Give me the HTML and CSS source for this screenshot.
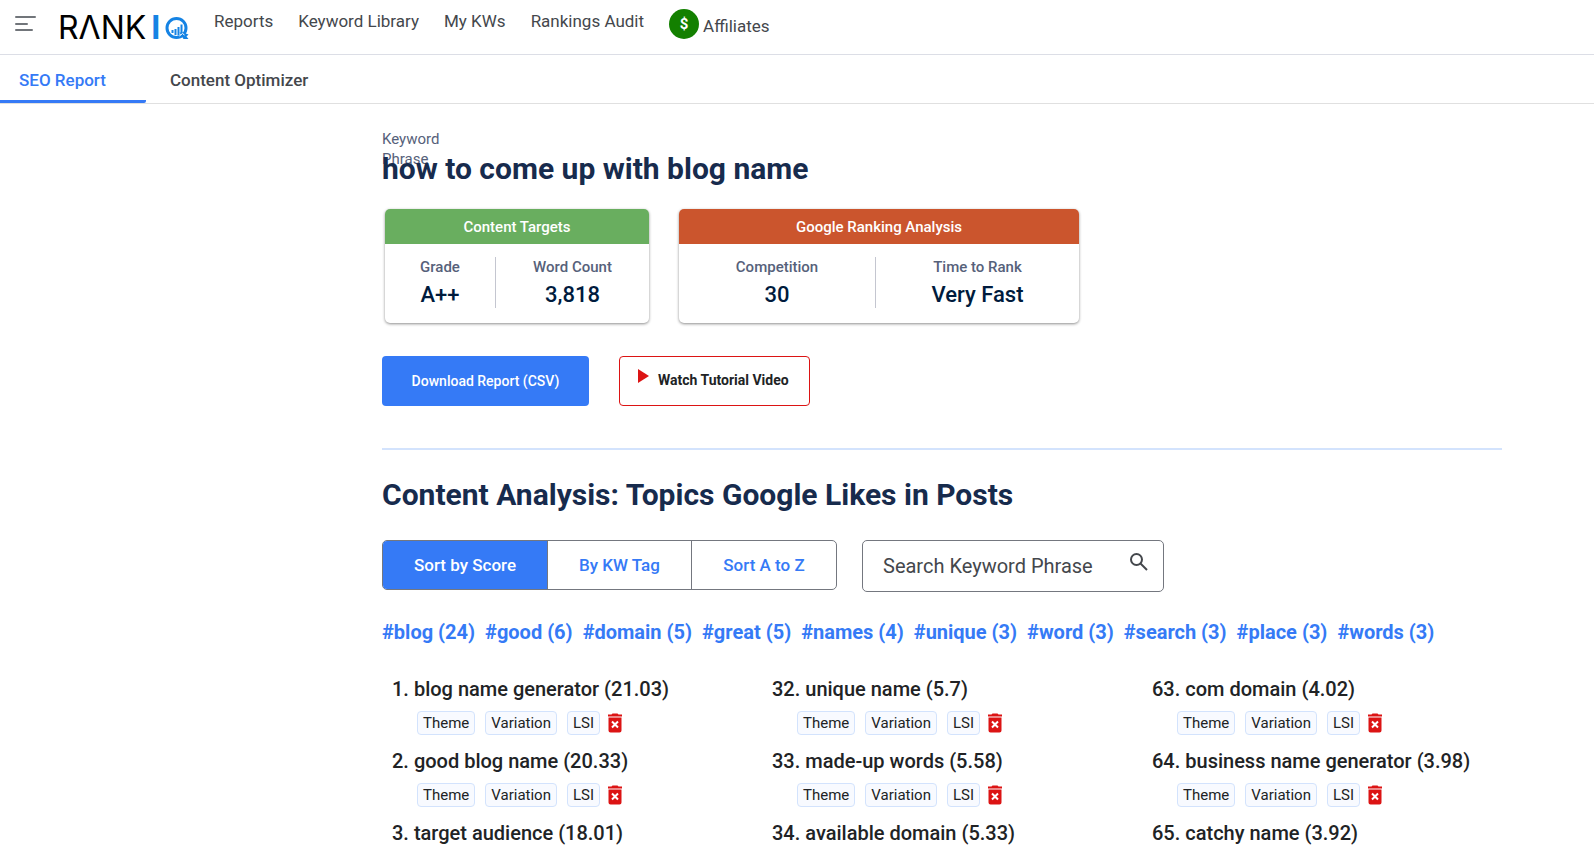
FILE: index.html
```html
<!DOCTYPE html>
<html lang="en">
<head>
<meta charset="utf-8">
<title>RankIQ – SEO Report</title>
<link rel="stylesheet" href="styles.css">
</head>
<body>
<svg class="defs" aria-hidden="true">
  <symbol id="trash" viewBox="0 0 16 20">
    <path d="M4.500 1.500 5.500.5h5l1 1h3.500v2H1v-2zM1.500 4.500h13v13a2 2 0 0 1-2 2h-9a2 2 0 0 1-2-2z"/>
    <path d="m5 8.500 6 6m0-6-6 6" stroke="#fff" stroke-width="2"/>
  </symbol>
</svg>
<header class="topbar">
  <button class="menu" aria-label="Toggle menu">
    <svg width="22" height="16" viewBox="0 0 22 16" fill="none" stroke="#71757a" stroke-width="2" stroke-linecap="round"><path d="M2 2h19M2 9h11M2 15h16"/></svg>
  </button>
  <a class="logo" href="#" aria-label="RankIQ"><span>RΛNK</span><span class="logo-i">I</span>
    <svg width="24" height="23" viewBox="0 0 24 23"><circle cx="11.500" cy="11" r="9.500" fill="none" stroke="#1583e4" stroke-width="3"/><path d="M14.500 15.500 18 15.500l5.500 2-2 2 2 2.500h-5z" fill="#1583e4"/><path d="M7.500 13v3M10.500 12v6M13.500 10v8.500M16.500 7.500v9" stroke="#1583e4" stroke-width="2"/><path d="m14.500 19 3-2.500 2 1.500" fill="none" stroke="#fff"/></svg>
  </a>
  <nav class="nav">
    <a href="#">Reports</a><a href="#">Keyword Library</a><a href="#">My KWs</a><a href="#">Rankings Audit</a>
    <a class="affiliates" href="#"><span class="coin">$</span><span>Affiliates</span></a>
  </nav>
</header>
<nav class="tabs"><a class="tab active" href="#">SEO Report</a><a class="tab" href="#">Content Optimizer</a></nav>
<main class="page">
  <div class="phrase">
    <p class="label">Keyword Phrase</p>
    <h1 class="title">how to come up with blog name</h1>
  </div>
  <section class="cards">
    <div class="card targets">
      <h2 class="card-head">Content Targets</h2>
      <dl class="stats"><div class="stat"><dt>Grade</dt><dd>A++</dd></div><div class="stat"><dt>Word Count</dt><dd>3,818</dd></div></dl>
    </div>
    <div class="card ranking">
      <h2 class="card-head">Google Ranking Analysis</h2>
      <dl class="stats"><div class="stat"><dt>Competition</dt><dd>30</dd></div><div class="stat"><dt>Time to Rank</dt><dd>Very Fast</dd></div></dl>
    </div>
  </section>
  <div class="actions">
    <button class="download">Download Report (CSV)</button>
    <button class="watch"><svg width="11" height="14" viewBox="0 0 11 14"><path d="M0 0 11 7 0 14z" fill="#dc1414"/></svg>Watch Tutorial Video</button>
  </div>
  <hr class="rule">
  <h2 class="title">Content Analysis: Topics Google Likes in Posts</h2>
  <div class="filters">
    <div class="sort"><button class="on">Sort by Score</button><button>By KW Tag</button><button>Sort A to Z</button></div>
    <div class="search"><input type="text" aria-label="Search Keyword Phrase" placeholder="Search Keyword Phrase">
      <button aria-label="Search"><svg width="18" height="18" viewBox="0 0 18 18" fill="none" stroke="#44474c" stroke-width="2"><circle cx="6.500" cy="6.500" r="5.500"/><path d="m10.500 10.500 6.500 6.500"/></svg></button></div>
  </div>
  <div class="tags"><a href="#">#blog (24)</a><a href="#">#good (6)</a><a href="#">#domain (5)</a><a href="#">#great (5)</a><a href="#">#names (4)</a><a href="#">#unique (3)</a><a href="#">#word (3)</a><a href="#">#search (3)</a><a href="#">#place (3)</a><a href="#">#words (3)</a></div>
  <div class="columns">
    <div class="column">
      <article class="topic"><h3>1. blog name generator (21.03)</h3><div class="chips"><button class="chip">Theme</button><button class="chip">Variation</button><button class="chip">LSI</button><button class="trash" aria-label="Delete"><svg width="16" height="20"><use href="#trash"/></svg></button></div></article>
      <article class="topic"><h3>2. good blog name (20.33)</h3><div class="chips"><button class="chip">Theme</button><button class="chip">Variation</button><button class="chip">LSI</button><button class="trash" aria-label="Delete"><svg width="16" height="20"><use href="#trash"/></svg></button></div></article>
      <article class="topic"><h3>3. target audience (18.01)</h3></article>
    </div>
    <div class="column">
      <article class="topic"><h3>32. unique name (5.7)</h3><div class="chips"><button class="chip">Theme</button><button class="chip">Variation</button><button class="chip">LSI</button><button class="trash" aria-label="Delete"><svg width="16" height="20"><use href="#trash"/></svg></button></div></article>
      <article class="topic"><h3>33. made-up words (5.58)</h3><div class="chips"><button class="chip">Theme</button><button class="chip">Variation</button><button class="chip">LSI</button><button class="trash" aria-label="Delete"><svg width="16" height="20"><use href="#trash"/></svg></button></div></article>
      <article class="topic"><h3>34. available domain (5.33)</h3></article>
    </div>
    <div class="column">
      <article class="topic"><h3>63. com domain (4.02)</h3><div class="chips"><button class="chip">Theme</button><button class="chip">Variation</button><button class="chip">LSI</button><button class="trash" aria-label="Delete"><svg width="16" height="20"><use href="#trash"/></svg></button></div></article>
      <article class="topic"><h3>64. business name generator (3.98)</h3><div class="chips"><button class="chip">Theme</button><button class="chip">Variation</button><button class="chip">LSI</button><button class="trash" aria-label="Delete"><svg width="16" height="20"><use href="#trash"/></svg></button></div></article>
      <article class="topic"><h3>65. catchy name (3.92)</h3></article>
    </div>
  </div>
</main>
</body>
</html>
```
FILE: styles.css
```css
* { box-sizing: border-box; margin: 0; padding: 0; }
body { font-family: Roboto, "Liberation Sans", sans-serif; color: #212325; background: #fff; overflow-x: hidden; }
a { color: inherit; text-decoration: none; }
button { font: inherit; color: inherit; border: 0; background: none; cursor: pointer; }
svg { display: block; }
.defs { display: none; }

.topbar { display: flex; align-items: flex-start; height: 55px; border-bottom: 1px solid #dcdee6; }
.menu { padding: 15px 14px; }
.logo { display: flex; align-items: center; justify-content: space-between; width: 131px; height: 32px; margin: 12px 0 0 8px; font: 400 32px/32px Inter, sans-serif; color: #000; }
.logo-i { font-weight: 700; color: #1583e4; }
.nav { display: flex; align-items: flex-start; gap: 25px; margin-left: 25px; font-size: 17px; line-height: 24px; color: #44474c; padding-top: 9px; }
.affiliates { display: flex; align-items: flex-start; gap: 4px; line-height: 34px; }
.coin { width: 30px; height: 30px; border-radius: 50%; background: #138000; color: #fff; font-weight: 700; font-size: 15px; line-height: 31px; text-align: center; }

.tabs { display: flex; height: 49px; border-bottom: 1px solid #e0e0e0; font-size: 17px; font-weight: 500; line-height: 50px; color: #44474c; }
.tab { padding: 0 24px; }
.tab.active { min-width: 146px; padding-left: 19px; color: #357af6; border-bottom: 3px solid #357af6; border-radius: 0 0 2px 0; }

.page { padding: 24px 92px 0 382px; }
.phrase { display: grid; }
.label { grid-area: 1 / 1; width: 70px; font-size: 15px; line-height: 20px; color: #56617a; padding-top: 1px; }
.phrase .title { grid-area: 1 / 1; margin-top: 22px; }
.title { font-size: 30px; font-weight: 700; line-height: 38px; color: #172b4d; }

.cards { display: flex; gap: 30px; margin: 21px 3px 0; }
.card { height: 114px; border-radius: 5px; overflow: hidden; box-shadow: 0 1px 3px rgba(0,0,0,.45); }
.targets { width: 264px; }
.ranking { width: 400px; }
.card-head { height: 35px; font-size: 15px; font-weight: 500; line-height: 36px; text-align: center; color: #fff; background: #69ae5f; }
.ranking .card-head { background: #cb552d; }
.stats { display: flex; padding: 13px 0; text-align: center; }
.stat { flex: 1; height: 51px; }
.targets .stat:first-child { flex: 0 0 110px; }
.ranking .stat:first-child { flex: 0 0 196px; }
.stat + .stat { border-left: 1px solid #c4c6d0; }
.stat dt { font-size: 15px; font-weight: 500; line-height: 20px; color: #56617a; }
.stat dd { font-size: 22px; font-weight: 500; line-height: 36px; color: #001b3d; }

.actions { display: flex; gap: 30px; margin-top: 33px; }
.actions button { height: 50px; border-radius: 4px; font-size: 14px; font-weight: 500; }
.download { min-width: 207px; padding: 0 29px; background: #357af6; color: #fff; }
.watch { display: flex; align-items: center; gap: 9px; min-width: 191px; padding: 0 20px 2px 18px; border: 1px solid #dc1414; }
.watch svg { margin-bottom: 8px; }
.actions .watch { font-weight: 700; }
.rule { height: 2px; margin: 42px 0 26px; border: 0; background: #d3e3fd; }

.filters { display: flex; gap: 25px; margin-top: 26px; }
.sort { display: grid; grid-template-columns: 164px 144px 145px; height: 50px; border: 1px solid #74777f; border-radius: 5px; overflow: hidden; font-size: 17px; font-weight: 500; color: #357af6; }
.sort button + button { border-left: 1px solid #74777f; }
.sort .on { background: #357af6; color: #fff; }
.search { display: flex; width: 302px; height: 52px; border: 1px solid #74777f; border-radius: 5px; }
.search input { flex: 1; min-width: 0; padding-left: 20px; border: 0; outline: 0; background: none; font: 400 20px/24px Roboto, sans-serif; color: #44474c; }
.search input::placeholder { color: #44474c; opacity: 1; }
.search button { padding: 0 15px 8px; }

.tags { display: flex; flex-wrap: wrap; gap: 10px; margin-top: 28px; font-size: 20px; font-weight: 700; line-height: 24px; color: #357af6; }
.columns { display: grid; grid-template-columns: repeat(3, 380px); margin: 31px 0 0 10px; }
.topic { height: 72px; }
.topic:last-child { height: auto; }
.topic h3 { font-size: 20px; font-weight: 500; line-height: 28px; white-space: nowrap; }
.chips { display: flex; align-items: center; padding: 8px 0 0 25px; gap: 10px; }
.chip { height: 24px; padding: 0 5px; border: 1px solid #d3e3fd; border-radius: 4px; background: #f8faff; font-size: 15px; line-height: 22px; }
.trash { fill: #dc1414; margin-left: -3px; }
```
